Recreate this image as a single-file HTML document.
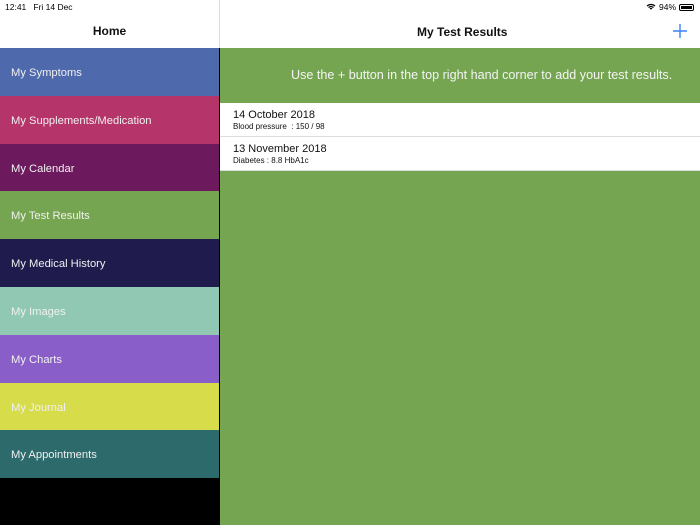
<!DOCTYPE html>
<html><head><meta charset="utf-8"><style>
*{margin:0;padding:0;box-sizing:border-box}
body{width:700px;height:525px;overflow:hidden;font-family:"Liberation Sans",sans-serif;background:#000;position:relative}
.left{position:absolute;left:0;top:0;width:219px;height:525px;background:#000}
.hdr{position:absolute;top:0;height:48px;background:#fff}
.item{height:47.8px;color:#f0f0f0;font-size:11.2px;padding-left:11px;line-height:50px}
.right{position:absolute;left:220px;top:0;width:480px;height:525px;background:#76a552}
.row{background:#fff;height:33px;border-bottom:1px solid #ddd;padding:7px 13px;color:#111}
.row .a{font-size:11px}.row .b{font-size:8px;margin-top:1px}
</style></head><body>
<div class="left">
<div class="hdr" style="left:0;width:219px">
<div style="position:absolute;left:5px;top:2px;font-size:8.5px">12:41&nbsp;&nbsp; Fri 14 Dec</div>
<div style="position:absolute;width:100%;text-align:center;top:24px;font-size:12px;font-weight:bold;color:#111">Home</div>
</div>
<div style="position:absolute;top:48px;width:219px">
<div class="item" style="background:#4f69ad">My Symptoms</div>
<div class="item" style="background:#b5356b">My Supplements/Medication</div>
<div class="item" style="background:#6d195e">My Calendar</div>
<div class="item" style="background:#76a552">My Test Results</div>
<div class="item" style="background:#1f1b4d">My Medical History</div>
<div class="item" style="background:#91c8b4">My Images</div>
<div class="item" style="background:#8a5ec9">My Charts</div>
<div class="item" style="background:#d6dc4a">My Journal</div>
<div class="item" style="background:#2d6a6c">My Appointments</div>
</div>
</div>
<div style="position:absolute;left:219px;top:0;width:1px;height:48px;background:#ddd"></div>
<div class="right">
<div class="hdr" style="left:0;width:480px">
<div style="position:absolute;right:6px;top:2px;font-size:8.5px;display:flex;align-items:center;gap:3px">
<svg width="10" height="8" viewBox="0 0 10 8"><path d="M1 3a6 6 0 0 1 8 0M2.5 4.5a4 4 0 0 1 5 0M4 6a1.5 1.5 0 0 1 2 0" stroke="#000" fill="none" stroke-width="1.2"/></svg>94%
<span style="display:inline-block;width:15px;height:7px;border:1px solid #000;border-radius:2px;padding:1px"><span style="display:block;width:100%;height:100%;background:#000"></span></span></div>
<div style="position:absolute;left:197px;top:25px;font-size:12px;font-weight:bold;color:#111">My Test Results</div>
<svg style="position:absolute;left:453px;top:24px" width="14" height="14"><path d="M7 0v14M0 7h14" stroke="#3a82f7" stroke-width="1.4"/></svg>
</div>
<div style="position:absolute;top:48px;width:480px;height:55px;color:#f4f4f4;font-size:12.6px;padding:20px 0 0 71px">Use the + button in the top right hand corner to add your test results.</div>
<div style="position:absolute;top:103px;width:480px">
<div class="row" style="height:34px;padding-top:6px"><div class="a">14 October 2018</div><div class="b">Blood pressure &nbsp;: 150 / 98</div></div>
<div class="row" style="height:34px;padding-top:6px"><div class="a">13 November 2018</div><div class="b">Diabetes : 8.8 HbA1c</div></div>
</div>
</div>
</body></html>
